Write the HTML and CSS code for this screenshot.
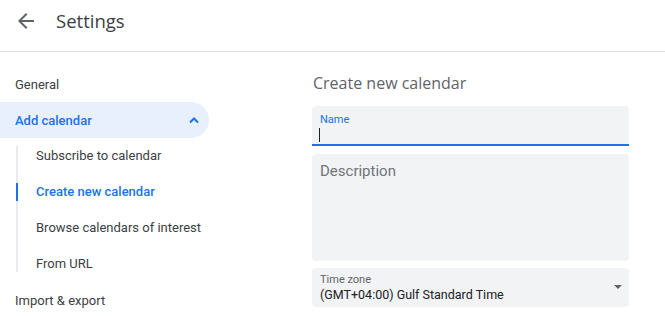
FILE: index.html
```html
<!DOCTYPE html>
<html lang="en">
<head>
    <meta charset="UTF-8">
    <meta name="viewport" content="width=device-width, initial-scale=1.0">
    <title>Settings</title>
    <link rel="stylesheet" href="styles.css">
</head>
<body>
    <header class="topbar">
        <button class="back-btn" aria-label="Back">
            <svg width="24" height="24" viewBox="0 0 24 24"><path d="M20 11H7.83l5.59-5.59L12 4l-8 8 8 8 1.41-1.41L7.83 13H20v-2z" fill="#5f6368"/></svg>
        </button>
        <h1 class="title">Settings</h1>
    </header>

    <div class="layout">
        <nav class="sidebar">
            <div class="nav-item">General</div>
            <div class="nav-item open">
                <span>Add calendar</span>
                <svg class="chevron" width="12" height="8" viewBox="0 0 12 8"><path d="M2 6.5l4-4 4 4" fill="none" stroke="#1a73e8" stroke-width="2"/></svg>
            </div>
            <div class="sub-list">
                <div class="sub-item">Subscribe to calendar</div>
                <div class="sub-item active">Create new calendar</div>
                <div class="sub-item">Browse calendars of interest</div>
                <div class="sub-item">From URL</div>
            </div>
            <div class="nav-item">Import &amp; export</div>
        </nav>

        <main class="content">
            <h2 class="section-title">Create new calendar</h2>

            <div class="field focused">
                <label class="field-label">Name</label>
                <div class="field-input"><span class="caret"></span></div>
            </div>

            <div class="field textarea">
                <div class="placeholder">Description</div>
            </div>

            <div class="field select">
                <div>
                    <label class="field-label">Time zone</label>
                    <div class="field-value">(GMT+04:00) Gulf Standard Time</div>
                </div>
                <span class="drop-arrow"></span>
            </div>
        </main>
    </div>
</body>
</html>
```

FILE: styles.css
```css
body {
    margin: 0;
    padding: 0;
    overflow: hidden;
    font-family: Roboto, "Liberation Sans", Arial, sans-serif;
    color: #3c4043;
    background: #fff;
}

.topbar {
    height: 52px;
    box-sizing: border-box;
    display: flex;
    align-items: flex-start;
    padding-top: 9px;
    border-bottom: 1px solid #dadce0;
}

.back-btn {
    width: 24px;
    height: 24px;
    padding: 0;
    margin: 0 18px 0 14px;
    border: none;
    background: none;
    cursor: pointer;
}

.title {
    margin: 0;
    line-height: 24px;
    font-family: "Open Sans", Roboto, sans-serif;
    font-size: 18.5px;
    font-weight: 400;
    color: #3c4043;
}

.layout {
    display: flex;
    padding-top: 14px;
}

.sidebar {
    width: 209px;
    flex-shrink: 0;
}

.nav-item {
    height: 36px;
    display: flex;
    align-items: center;
    justify-content: space-between;
    padding: 0 9px 0 15px;
    font-size: 13px;
    border-radius: 0 18px 18px 0;
}

.nav-item.open {
    background: #e8f0fe;
    color: #1a73e8;
    font-weight: 500;
}

.chevron {
    margin-top: -1px;
}

.sub-list {
    position: relative;
    margin-left: 16px;
}

.sub-list::before {
    content: "";
    position: absolute;
    left: 0;
    top: 8px;
    bottom: 10px;
    width: 2px;
    background: #e8eaed;
}

.sub-item {
    position: relative;
    height: 36px;
    line-height: 36px;
    padding-left: 20px;
    font-size: 13px;
}

.sub-item.active {
    color: #1a73e8;
    font-weight: 500;
}

.sub-item.active::before {
    content: "";
    position: absolute;
    left: 0;
    top: 9px;
    width: 2px;
    height: 18px;
    background: #1a73e8;
}

.content {
    margin-left: 103px;
    width: 317px;
}

.section-title {
    margin: -1px 0 5px 1px;
    height: 36px;
    line-height: 36px;
    font-family: "Open Sans", Roboto, sans-serif;
    font-size: 16px;
    font-weight: 400;
    color: #5f6368;
}

.field {
    background: #f1f3f4;
    border-radius: 4px;
    margin-bottom: 8px;
    padding: 0 8px;
}

.field.focused {
    height: 38px;
    border-radius: 4px 4px 0 0;
    border-bottom: 2px solid #1a73e8;
}

.field-label {
    display: block;
    font-size: 11px;
    color: #5f6368;
}

.focused .field-label {
    color: #1a73e8;
    padding-top: 7px;
    line-height: 13px;
}

.field-input {
    height: 18px;
    padding-top: 2px;
}

.caret {
    display: block;
    width: 1px;
    height: 14px;
    background: #202124;
    margin-left: -1px;
}

.field.textarea {
    height: 107px;
    margin-bottom: 7px;
}

.placeholder {
    padding-top: 8px;
    font-size: 15px;
    color: #70757a;
}

.field.select {
    height: 39px;
    display: flex;
    justify-content: space-between;
    align-items: center;
}

.select .field-label {
    line-height: 14px;
    margin-top: 1px;
}

.field-value {
    font-size: 12.5px;
    color: #202124;
    line-height: 16px;
}

.drop-arrow {
    width: 0;
    height: 0;
    border-left: 4px solid transparent;
    border-right: 4px solid transparent;
    border-top: 4px solid #5f6368;
    margin-right: -1px;
    margin-top: -2px;
}
```
